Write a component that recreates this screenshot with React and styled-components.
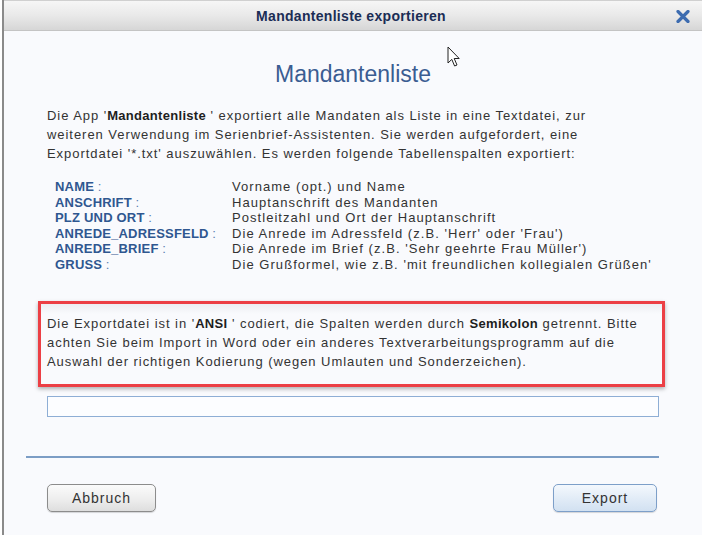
import React from "react";
import styled, { createGlobalStyle } from "styled-components";

const GlobalStyle = createGlobalStyle`
  html, body {
    margin: 0;
    padding: 0;
    background: #ffffff;
  }
  body {
    font-family: "Liberation Sans", Arial, sans-serif;
  }
`;

const columns = [
  ["NAME", "Vorname (opt.) und Name"],
  ["ANSCHRIFT", "Hauptanschrift des Mandanten"],
  ["PLZ UND ORT", "Postleitzahl und Ort der Hauptanschrift"],
  ["ANREDE_ADRESSFELD", "Die Anrede im Adressfeld (z.B. 'Herr' oder 'Frau')"],
  ["ANREDE_BRIEF", "Die Anrede im Brief (z.B. 'Sehr geehrte Frau Müller')"],
  ["GRUSS", "Die Grußformel, wie z.B. 'mit freundlichen kollegialen Grüßen'"],
];

function Cursor() {
  return (
    <CursorWrap>
      <svg width="14" height="22" viewBox="0 0 14 22">
        <path
          d="M1 1 L1 17 L4.8 13.4 L7.6 20 L10 19 L7.2 12.5 L12.2 12.5 Z"
          fill="#ffffff"
          stroke="#222"
          strokeWidth="1"
          strokeLinejoin="round"
        />
      </svg>
    </CursorWrap>
  );
}

function App() {
  return (
    <>
      <GlobalStyle />
      <Window>
        <TitleBar>
          <Title>Mandantenliste exportieren</Title>
          <Close>
            <svg width="14" height="13" viewBox="0 0 14 13">
              <path
                d="M2 1.5 L12 11.5 M12 1.5 L2 11.5"
                stroke="#3d6cb0"
                strokeWidth="3.2"
                strokeLinecap="round"
              />
            </svg>
          </Close>
        </TitleBar>
        <Body>
          <Cursor />
          <Heading>Mandantenliste</Heading>
          <Text top={19}>
            Die App '<b>Mandantenliste</b> ' exportiert alle Mandaten als Liste in eine Textdatei, zur
            <br />
            weiteren Verwendung im Serienbrief-Assistenten. Sie werden aufgefordert, eine
            <br />
            Exportdatei '*.txt' auszuwählen. Es werden folgende Tabellenspalten exportiert:
          </Text>
          <Columns>
            {columns.map(([key, desc]) => (
              <React.Fragment key={key}>
                <Key>
                  <b>{key}</b> :
                </Key>
                <Value>{desc}</Value>
              </React.Fragment>
            ))}
          </Columns>
          <Notice>
            <Text>
              Die Exportdatei ist in '<b>ANSI</b> ' codiert, die Spalten werden durch <b>Semikolon</b> getrennt. Bitte
              <br />
              achten Sie beim Import in Word oder ein anderes Textverarbeitungsprogramm auf die
              <br />
              Auswahl der richtigen Kodierung (wegen Umlauten und Sonderzeichen).
            </Text>
          </Notice>
          <FileInput />
          <Separator />
          <Buttons>
            <Button>Abbruch</Button>
            <Button primary>Export</Button>
          </Buttons>
        </Body>
      </Window>
    </>
  );
}

const Window = styled.div`
  position: relative;
  margin-left: 2px;
  width: 700px;
  height: 535px;
  border-left: 2px solid #8a8a8a;
  box-sizing: border-box;
  background: #f9fafd;
  display: flex;
  flex-direction: column;
`;

const TitleBar = styled.div`
  height: 31px;
  box-sizing: border-box;
  background: linear-gradient(#f6f6f6, #e9e9e9 50%, #d6d6d6);
  border-top: 1px solid #d0d0d0;
  border-bottom: 1px solid #c4c4c4;
  display: flex;
  align-items: center;
  justify-content: center;
  position: relative;
`;

const Title = styled.div`
  font-size: 14px;
  font-weight: bold;
  letter-spacing: 0.3px;
  color: #1b2d55;
  margin-left: -4px;
`;

const Close = styled.div`
  position: absolute;
  right: 12px;
  top: 9px;
  display: flex;
`;

const CursorWrap = styled.div`
  position: absolute;
  left: 443px;
  top: 15px;
  display: flex;
`;

const Body = styled.div`
  position: relative;
  flex: 1;
  padding: 0 43px 0 43px;
  display: flex;
  flex-direction: column;
`;

const Heading = styled.h1`
  margin: 30px 0 0 0;
  font-size: 23px;
  line-height: 26px;
  font-weight: normal;
  text-align: center;
  color: #3b5d92;
`;

const Text = styled.p`
  margin: ${(p) => p.top || 0}px 0 0 0;
  font-size: 13px;
  line-height: 19px;
  letter-spacing: 0.95px;
  color: #333;
  white-space: nowrap;

  b {
    color: #1e1e1e;
    letter-spacing: 0.3px;
  }
`;

const Columns = styled.div`
  margin: 16px 0 0 8px;
  display: grid;
  grid-template-columns: 177px 1fr;
  font-size: 13px;
  line-height: 15.6px;
`;

const Key = styled.div`
  color: #5a7db0;
  white-space: nowrap;

  b {
    color: #2f5790;
    letter-spacing: 0.2px;
  }
`;

const Value = styled.div`
  color: #333;
  letter-spacing: 1.05px;
  white-space: nowrap;
`;

const Notice = styled.div`
  margin: 28px -6px 0 -9px;
  padding: 10px 6px 13px 6px;
  border: 3px solid #ec3f45;
  background: linear-gradient(#eceef2, #f9fafd 10px);
  box-shadow: 0 2px 4px rgba(0, 0, 0, 0.3);
`;

const FileInput = styled.div`
  margin-top: 9px;
  height: 21px;
  box-sizing: border-box;
  border: 1px solid #8eaed5;
  background: #fcfdff;
`;

const Separator = styled.div`
  margin: 39px 0 0 -21px;
  height: 2px;
  background: #7c9dc5;
`;

const Buttons = styled.div`
  margin-top: 26px;
  display: flex;
  justify-content: space-between;
  padding-right: 2px;
`;

const Button = styled.button`
  width: ${(p) => (p.primary ? "104px" : "109px")};
  height: 28px;
  box-sizing: border-box;
  border-radius: 5px;
  border: 1px solid ${(p) => (p.primary ? "#7d9fc9" : "#8c8c8c")};
  background: ${(p) =>
    p.primary
      ? "linear-gradient(#f4f8fd, #dfeaf6 60%, #d2e1f1)"
      : "linear-gradient(#fbfbfb, #ececec 60%, #dedede)"};
  box-shadow: 0 1px 1px rgba(0, 0, 0, 0.15);
  font-family: "Liberation Sans", Arial, sans-serif;
  font-size: 14px;
  color: #333;
  letter-spacing: 1px;
  padding: 0;
  cursor: pointer;
`;

export default App;
